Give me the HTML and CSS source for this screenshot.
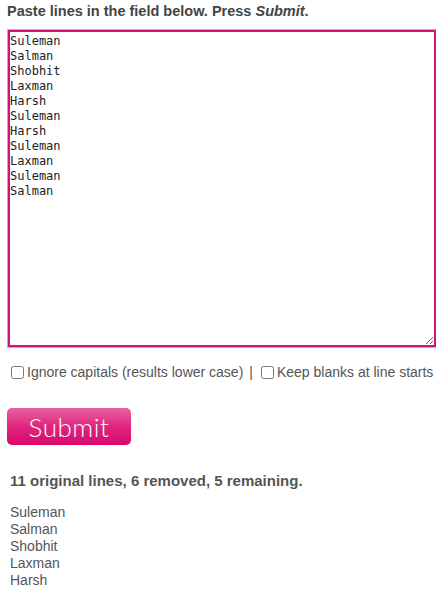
FILE: index.html
```html
<!DOCTYPE html>
<html>
<head>
    <title>Remove Duplicate Lines</title>
    <link rel="stylesheet" href="styles.css">
</head>
<body>
    <h3 class="intro">Paste lines in the field below. Press <em>Submit</em>.</h3>

    <form class="dedupe" onsubmit="return false;">
        <textarea id="lines" class="lines" spellcheck="false">Suleman
Salman
Shobhit
Laxman
Harsh
Suleman
Harsh
Suleman
Laxman
Suleman
Salman</textarea>

        <div class="options">
            <label><input type="checkbox" id="lower"> Ignore capitals (results lower case)</label>
            <span class="sep">|</span>
            <label><input type="checkbox" id="blanks"> Keep blanks at line starts</label>
        </div>

        <button type="submit" class="submit">Submit</button>
    </form>

    <p class="summary">11 original lines, 6 removed, 5 remaining.</p>

    <div class="result">
        Suleman<br>
        Salman<br>
        Shobhit<br>
        Laxman<br>
        Harsh
    </div>
</body>
</html>
```

FILE: styles.css
```css
body {
    font-family: 'Liberation Sans', Arial, sans-serif;
    color: #555;
    margin: 0;
    padding: 0 7px;
}
.intro {
    font-size: 14.5px;
    font-weight: bold;
    color: #444;
    margin: 3px 0 11px;
}
.lines {
    display: block;
    box-sizing: border-box;
    width: 428px;
    height: 317px;
    margin: 0 0 0 1px;
    padding: 2px 0;
    font-family: 'DejaVu Sans Mono', monospace;
    font-size: 12px;
    line-height: 15px;
    color: #222;
    border: 2px solid #d0127a;
    outline: 1px solid #9ab8f0;
    resize: both;
}
.options {
    display: flex;
    align-items: center;
    gap: 6px;
    margin: 17px 0 0 4px;
    font-size: 14px;
    white-space: nowrap;
}
.options label {
    display: flex;
    align-items: center;
    gap: 3px;
}
.options input {
    margin: 0;
    width: 13px;
    height: 13px;
}
.sep {
    margin-right: 2px;
}
.submit {
    display: block;
    margin-top: 28px;
    width: 124px;
    height: 37px;
    border: none;
    border-radius: 5px;
    background: linear-gradient(#e8629f, #e0257f 50%, #d8086c);
    color: #fff;
    font-family: 'Lato', sans-serif;
    font-weight: 300;
    font-size: 26px;
    letter-spacing: 0.5px;
    cursor: pointer;
}
.summary {
    font-size: 15px;
    font-weight: bold;
    margin: 27px 0 15px 3px;
}
.result {
    margin-left: 3px;
    font-size: 14px;
    line-height: 17px;
}
```
